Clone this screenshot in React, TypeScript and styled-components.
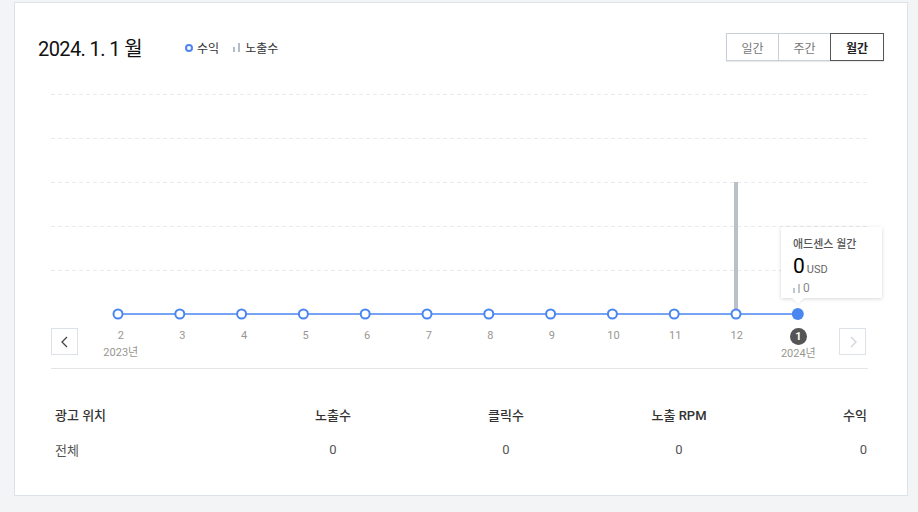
import styled, { createGlobalStyle } from "styled-components";

const GlobalStyle = createGlobalStyle`
  html, body {
    margin: 0;
    padding: 0;
    background: #f3f4f6;
    font-family: Roboto, "Noto Sans CJK KR", sans-serif;
  }
`;

const Page = styled.div`
  padding: 2px 10px 16px 14px;
`;

const Card = styled.section`
  width: 846px;
  background: #fff;
  border: 1px solid #dde1e8;
  padding: 30px 23px 28px 23px;
`;

const Header = styled.header`
  display: flex;
  align-items: center;
  height: 28px;
`;

const Title = styled.h1`
  margin: 0;
  font-size: 20px;
  font-weight: 400;
  color: #111;
  letter-spacing: -0.6px;
`;

const Legend = styled.div`
  display: flex;
  align-items: center;
  gap: 14px;
  margin-left: 43px;
  margin-top: 1px;
`;

const LegendItem = styled.span`
  display: flex;
  align-items: center;
  gap: 4px;
  font-size: 12px;
  color: #333;
`;

const Ring = styled.span`
  width: 4px;
  height: 4px;
  border: 2px solid #4a86f0;
  border-radius: 50%;
`;

const Tabs = styled.div`
  display: flex;
  margin-left: auto;
  box-shadow: 0 1px 1px rgba(0, 0, 0, 0.08);
`;

const Tab = styled.button<{ $active?: boolean }>`
  width: ${(p) => (p.$active ? 54 : 53)}px;
  height: 28px;
  background: #fff;
  font-family: inherit;
  font-size: 12px;
  font-weight: ${(p) => (p.$active ? 700 : 400)};
  color: ${(p) => (p.$active ? "#222" : "#777")};
  border: 1px solid ${(p) => (p.$active ? "#555" : "#c9cfd7")};
  position: ${(p) => (p.$active ? "relative" : "static")};
  cursor: pointer;

  & + & {
    margin-left: -1px;
  }
`;

const Chart = styled.div`
  position: relative;
  margin: 23px 16px 0 13px;
`;

const Plot = styled.svg`
  display: block;
`;

const Axis = styled.div`
  display: flex;
  align-items: flex-start;
  margin-top: 4px;
  height: 34px;
`;

const NavButton = styled.button<{ $disabled?: boolean }>`
  width: 27px;
  height: 27px;
  padding: 0;
  display: flex;
  align-items: center;
  justify-content: center;
  background: #fff;
  border: 1px solid #dde1e8;
  color: ${(p) => (p.$disabled ? "#d0d4da" : "#444")};
  cursor: pointer;
`;

const Ticks = styled.div`
  display: grid;
  grid-template-columns: repeat(12, 61.6px);
  margin-left: 12px;
  margin-right: 10px;
`;

const Tick = styled.div`
  display: flex;
  flex-direction: column;
  align-items: center;
  font-size: 11px;
  color: #9a9690;
  line-height: 16px;
`;

const ActiveTick = styled.span`
  width: 17px;
  height: 17px;
  border-radius: 50%;
  background: #555;
  color: #fff;
  font-weight: 700;
  display: flex;
  align-items: center;
  justify-content: center;
  line-height: 1;
`;

const Year = styled.span`
  margin-top: 1px;
  font-size: 11px;
  color: #9a9690;
`;

const Tooltip = styled.div`
  position: absolute;
  left: 730px;
  top: 143px;
  width: 89px;
  height: 58px;
  padding: 11px 0 2px 12px;
  background: #fff;
  box-shadow: 0 1px 4px rgba(0, 0, 0, 0.16);
  display: flex;
  flex-direction: column;

  &::after {
    content: "";
    position: absolute;
    left: 11px;
    bottom: -6px;
    border-left: 6px solid transparent;
    border-right: 6px solid transparent;
    border-top: 6px solid #fff;
    filter: drop-shadow(0 1px 1px rgba(0, 0, 0, 0.08));
  }
`;

const TipTitle = styled.div`
  font-size: 11px;
  font-weight: 500;
  color: #555;
  line-height: 14px;
`;

const TipValue = styled.div`
  display: flex;
  align-items: baseline;
  gap: 2px;
  margin-top: 3px;
  font-size: 21px;
  line-height: 22px;
  color: #000;
`;

const TipUnit = styled.span`
  font-size: 11px;
  color: #666;
`;

const TipSub = styled.div`
  display: flex;
  align-items: center;
  gap: 2px;
  font-size: 12px;
  color: #888;
  line-height: 14px;
`;

const Divider = styled.hr`
  margin: 6px 16px 0 13px;
  border: none;
  border-top: 1px solid #e3e5e8;
`;

const Table = styled.div`
  display: grid;
  grid-template-columns: 196px 173px 173px 173px 1fr;
  margin: 28px 16px 0 13px;
`;

const Cell = styled.div<{ $align?: "left" | "center" | "right"; $head?: boolean }>`
  height: 35px;
  display: flex;
  align-items: center;
  justify-content: ${(p) =>
    p.$align === "left" ? "flex-start" : p.$align === "right" ? "flex-end" : "center"};
  padding: ${(p) => (p.$align === "left" ? "0 0 0 4px" : "0 1px 0 0")};
  font-size: 13px;
  font-weight: ${(p) => (p.$head ? 500 : 400)};
  color: ${(p) => (p.$head ? "#333" : "#555")};
`;

const BarsIcon = ({ color = "#b4bcc6" }: { color?: string }) => (
  <svg width="8" height="9" viewBox="0 0 8 9">
    <rect x="0" y="4" width="2" height="5" fill={color} />
    <rect x="5" y="0" width="2" height="9" fill={color} />
  </svg>
);

const months = ["2", "3", "4", "5", "6", "7", "8", "9", "10", "11", "12", "1"];
const BLUE = "#4a86f0";
const STEP = 61.8;
const X0 = 67;
const BASE = 230;

const columns = [
  { label: "광고 위치", value: "전체", align: "left" as const },
  { label: "노출수", value: "0", align: "center" as const },
  { label: "클릭수", value: "0", align: "center" as const },
  { label: "노출 RPM", value: "0", align: "center" as const },
  { label: "수익", value: "0", align: "right" as const },
];

function App() {
  const points = months.map((_, i) => X0 + STEP * i);
  const last = points.length - 1;

  return (
    <>
      <GlobalStyle />
      <Page>
        <Card>
          <Header>
            <Title>2024. 1. 1 월</Title>
            <Legend>
              <LegendItem>
                <Ring />
                수익
              </LegendItem>
              <LegendItem>
                <BarsIcon />
                노출수
              </LegendItem>
            </Legend>
            <Tabs>
              <Tab>일간</Tab>
              <Tab>주간</Tab>
              <Tab $active>월간</Tab>
            </Tabs>
          </Header>

          <Chart>
            <Plot width="817" height="240" viewBox="0 0 817 240">
              {[10, 54, 98, 142, 186].map((y) => (
                <line
                  key={y}
                  x1="0"
                  x2="817"
                  y1={y + 0.5}
                  y2={y + 0.5}
                  stroke="#e8eaed"
                  strokeDasharray="4 3"
                />
              ))}
              <rect x={points[10] - 2} y="98" width="4" height={BASE - 98} fill="#b8c0ca" />
              <line x1={points[0]} x2={points[last]} y1={BASE} y2={BASE} stroke={BLUE} strokeWidth="1.5" />
              {points.map((x, i) =>
                i === last ? (
                  <circle key={i} cx={x} cy={BASE} r="6" fill={BLUE} />
                ) : (
                  <circle key={i} cx={x} cy={BASE} r="4.5" fill="#fff" stroke={BLUE} strokeWidth="2" />
                )
              )}
            </Plot>

            <Tooltip>
              <TipTitle>애드센스 월간</TipTitle>
              <TipValue>
                0<TipUnit>USD</TipUnit>
              </TipValue>
              <TipSub>
                <BarsIcon color="#c0c6ce" />0
              </TipSub>
            </Tooltip>

            <Axis>
              <NavButton>
                <svg width="10" height="12" viewBox="0 0 10 12">
                  <path d="M7 1 L2 6 L7 11" fill="none" stroke="currentColor" strokeWidth="1.3" />
                </svg>
              </NavButton>
              <Ticks>
                {months.map((m, i) => (
                  <Tick key={m + i}>
                    {i === last ? <ActiveTick>{m}</ActiveTick> : <span>{m}</span>}
                    {i === 0 && <Year>2023년</Year>}
                    {i === last && <Year>2024년</Year>}
                  </Tick>
                ))}
              </Ticks>
              <NavButton $disabled>
                <svg width="10" height="12" viewBox="0 0 10 12">
                  <path d="M3 1 L8 6 L3 11" fill="none" stroke="currentColor" strokeWidth="1.3" />
                </svg>
              </NavButton>
            </Axis>
          </Chart>

          <Divider />

          <Table>
            {columns.map((c) => (
              <Cell key={c.label} $align={c.align} $head>
                {c.label}
              </Cell>
            ))}
            {columns.map((c) => (
              <Cell key={c.label + "v"} $align={c.align}>
                {c.value}
              </Cell>
            ))}
          </Table>
        </Card>
      </Page>
    </>
  );
}

export default App;
